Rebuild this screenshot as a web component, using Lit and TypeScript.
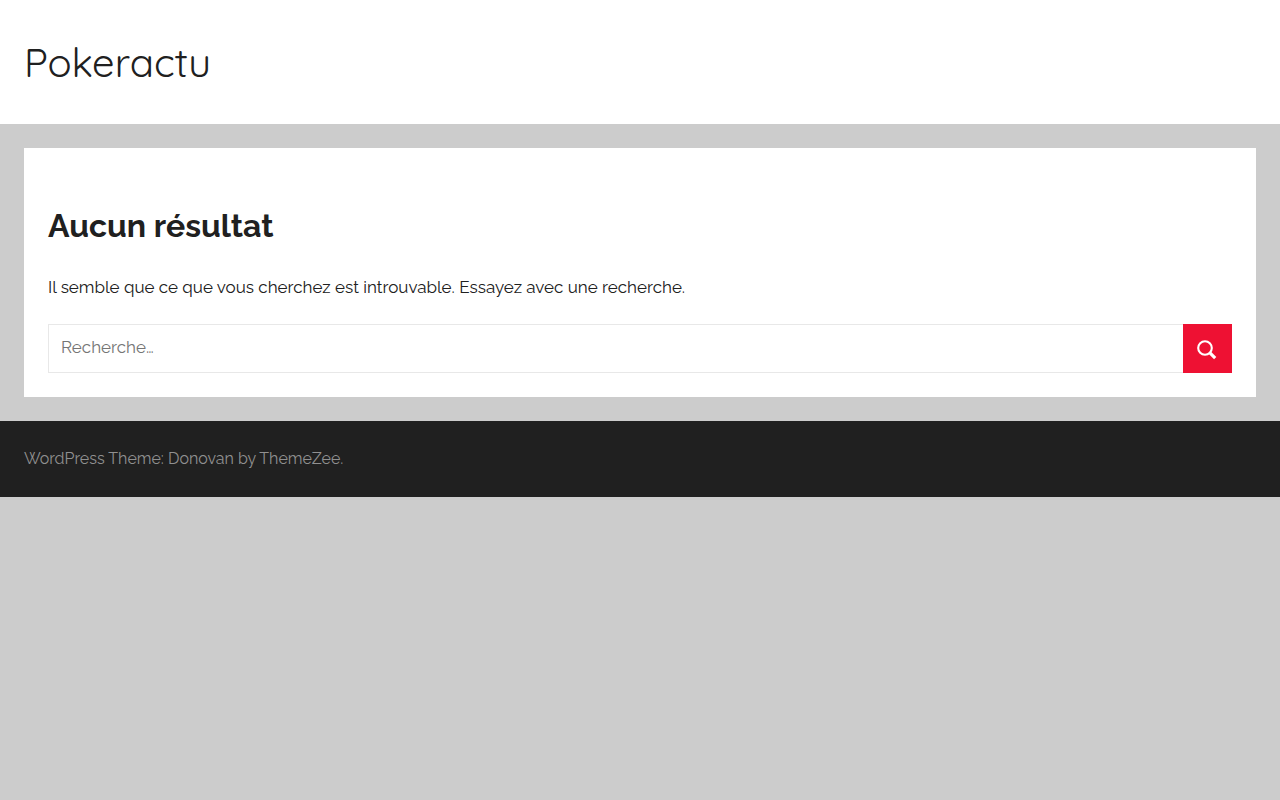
import { LitElement, html, css } from "lit";
import { customElement } from "lit/decorators.js";

@customElement("app-root")
export class AppRoot extends LitElement {
  static styles = css`
    :host {
      display: block;
      min-height: 100vh;
      background: #ccc;
      color: #202020;
      font: 400 17px/28px Raleway, Lato, sans-serif;
    }
    * {
      box-sizing: border-box;
    }
    .header {
      padding: 38px 24px;
      background: #fff;
    }
    .site-title {
      margin: 0;
      font: 400 40px/48px Quicksand, Lato, sans-serif;
    }
    .site-title a {
      color: inherit;
      text-decoration: none;
    }
    .content {
      margin: 24px;
      padding: 56px 24px 24px;
      background: #fff;
    }
    .page-title {
      margin: 0 0 24px;
      font-size: 32px;
      line-height: 44px;
      font-weight: 700;
    }
    .message {
      margin: 0 0 22px;
      line-height: 30px;
    }
    .search {
      display: flex;
    }
    .label {
      flex: 1;
      display: flex;
      min-width: 0;
    }
    .field {
      flex: 1;
      min-width: 0;
      height: 49px;
      margin: 0;
      padding: 0 12px 4px;
      border: 1px solid #e8e8e8;
      border-right: 0;
      border-radius: 0;
      background: #fff;
      color: #202020;
      font: inherit;
      outline: 0;
    }
    .field::placeholder {
      color: #757575;
    }
    .submit {
      display: flex;
      align-items: center;
      justify-content: center;
      width: 49px;
      height: 49px;
      margin: 0;
      padding: 0;
      border: 0;
      background: #ee1133;
      color: #fff;
      cursor: pointer;
    }
    .footer {
      padding: 24px;
      background: #202020;
      color: #909090;
      font-size: 16px;
    }
  `;

  render() {
    return html`
      <header class="header">
        <h1 class="site-title"><a href="#">Pokeractu</a></h1>
      </header>
      <main class="content">
        <h2 class="page-title">Aucun résultat</h2>
        <p class="message">
          Il semble que ce que vous cherchez est introuvable. Essayez avec une recherche.
        </p>
        <form class="search" role="search">
          <label class="label">
            <input class="field" type="search" placeholder="Recherche…" aria-label="Recherche" />
          </label>
          <button class="submit" type="submit" aria-label="Rechercher">
            <svg width="49" height="49" viewBox="0 0 49 49" fill="none" stroke="currentColor">
              <circle cx="22" cy="24" r="6.8" stroke-width="2.1" />
              <path d="M26.7 28.7 L32.2 34.2" stroke-width="3.2" />
            </svg>
          </button>
        </form>
      </main>
      <footer class="footer">WordPress Theme: Donovan by ThemeZee.</footer>
    `;
  }
}
